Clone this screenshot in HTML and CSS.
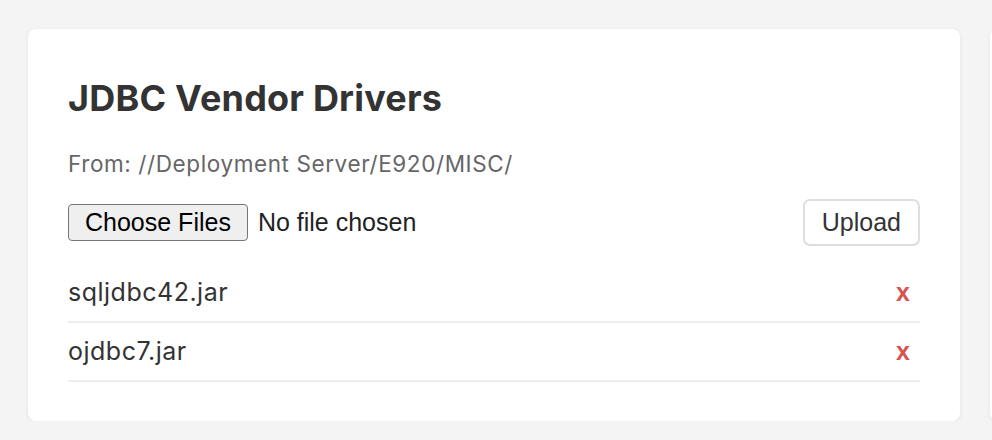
FILE: index.html
```html
<!DOCTYPE html>
<html lang="en">
<head>
<meta charset="utf-8">
<title>JDBC Vendor Drivers</title>
<link rel="stylesheet" href="styles.css">
</head>
<body>
<main class="page">
  <section class="card">
    <h2 class="card-title">JDBC Vendor Drivers</h2>
    <p class="source">From: //Deployment Server/E920/MISC/</p>
    <div class="upload-row">
      <label class="file-picker">
        <span class="file-btn">Choose Files</span>
        <span class="file-status">No file chosen</span>
      </label>
      <button class="upload-btn" type="button">Upload</button>
    </div>
    <ul class="file-list">
      <li class="file-item"><span class="file-name">sqljdbc42.jar</span><button class="remove-btn" type="button">x</button></li>
      <li class="file-item"><span class="file-name">ojdbc7.jar</span><button class="remove-btn" type="button">x</button></li>
    </ul>
  </section>
  <section class="card card-next"></section>
</main>
</body>
</html>
```

FILE: styles.css
```css
html, body {
  margin: 0;
  padding: 0;
}

body {
  background: #f4f4f4;
  overflow: hidden;
  font-family: Inter, "Noto Sans", sans-serif;
  color: #333;
}

.page {
  display: flex;
  gap: 30px;
  padding: 29px 0 0 28px;
}

.card {
  flex: 0 0 932px;
  box-sizing: border-box;
  background: #fff;
  border-radius: 8px;
  box-shadow: 0 1px 4px rgba(0, 0, 0, 0.07);
  padding: 47px 40px 39px 40px;
}

.card-next {
  height: 392px;
  padding: 0;
}

.card-title {
  margin: 0;
  font-size: 36px;
  line-height: 44px;
  font-weight: 700;
  color: #333;
  letter-spacing: 0.2px;
}

.source {
  margin: 29px 0 0 0;
  font-size: 22.5px;
  line-height: 29px;
  letter-spacing: 0.6px;
  color: #666;
}

.upload-row {
  margin-top: 21px;
  display: flex;
  align-items: center;
  justify-content: space-between;
  height: 47px;
}

.file-picker {
  display: flex;
  align-items: center;
  font-family: "Liberation Sans", Arial, sans-serif;
  font-size: 25px;
}

.file-btn {
  box-sizing: border-box;
  height: 37px;
  line-height: 35px;
  padding: 0 16px;
  border: 1px solid #767676;
  border-radius: 4px;
  background: #efefef;
  color: #000;
}

.file-status {
  margin-left: 10px;
  color: #222;
}

.upload-btn {
  box-sizing: border-box;
  height: 47px;
  padding: 0 17px;
  border: 2px solid #dedede;
  border-radius: 7px;
  background: #fff;
  color: #333;
  font-family: "Liberation Sans", Arial, sans-serif;
  font-size: 25px;
  line-height: 43px;
}

.file-list {
  list-style: none;
  margin: 18px 0 0 0;
  padding: 0;
}

.file-item {
  display: flex;
  align-items: center;
  justify-content: space-between;
  height: 59px;
  box-sizing: border-box;
  border-bottom: 2px solid #eeeeee;
}

.file-name {
  font-size: 25px;
  line-height: 29px;
  letter-spacing: 0.5px;
  color: #333;
}

.remove-btn {
  border: 0;
  background: none;
  padding: 0 10px 0 0;
  font-family: "Liberation Sans", Arial, sans-serif;
  font-weight: 700;
  font-size: 25px;
  line-height: 29px;
  color: #d9534f;
  cursor: pointer;
}
```
